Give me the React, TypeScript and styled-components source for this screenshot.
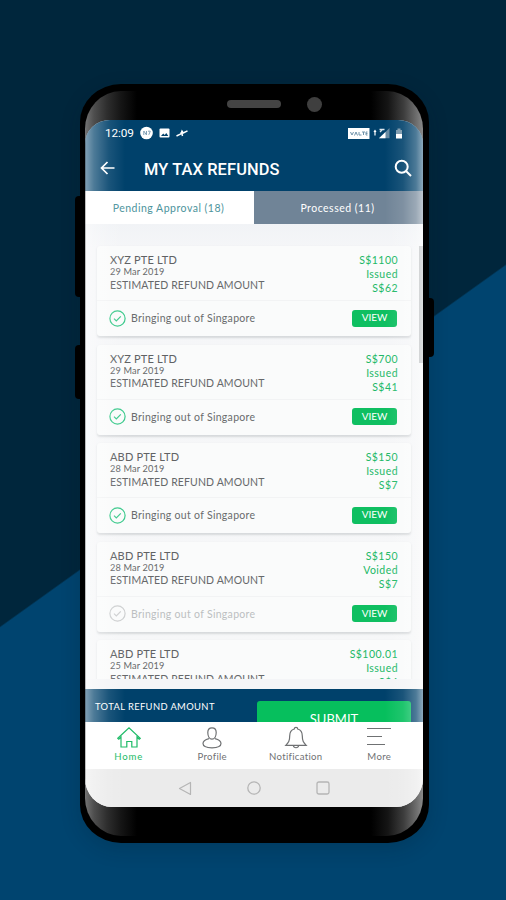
import React from "react";
import styled, { createGlobalStyle, css } from "styled-components";

const Global = createGlobalStyle`
  *, *::before, *::after { box-sizing: border-box; }
  html, body { margin: 0; padding: 0; background: #00446f; }
  body { font-family: Lato, "Open Sans", sans-serif; overflow: hidden; }
  svg { display: block; flex: none; }
`;

const Stage = styled.main`
  width: 506px;
  height: 900px;
  padding: 84px 77px 57px 80px;
  background: linear-gradient(144.4deg, #00263c 0, #00263c 49.6%, #00446f 49.75%, #00446f 100%);
`;

const Phone = styled.div`
  position: relative;
  width: 349px;
  height: 759px;
  padding: 7px 6px 7px 5px;
  border-radius: 41px / 38px;
  background: #000;
  box-shadow: 0 6px 20px rgba(0, 24, 40, 0.2);
`;

const SideButton = styled.i<{ $side: "left" | "right"; $top: number; $height: number }>`
  position: absolute;
  ${(p) => p.$side}: -5px;
  top: ${(p) => p.$top}px;
  width: 7px;
  height: ${(p) => p.$height}px;
  background: #000;
  border-radius: ${(p) => (p.$side === "left" ? "4px 0 0 4px" : "0 4px 4px 0")};
`;

const Body = styled.div`
  height: 100%;
  display: flex;
  flex-direction: column;
  overflow: hidden;
  border-radius: 36px / 38px;
  background: linear-gradient(90deg, #747474 0, #4e4e4e 9px, #2e2e2e 22px, #151515 36px, #000 52px, #000 286px, #151515 303px, #3e3e3e 319px, #707070 332px, #8a8a8a 100%);
`;

const Speaker = styled.div`
  height: 29px;
  flex: none;
  display: flex;
  align-items: center;
  gap: 26px;
  padding: 0 0 3px 142px;
`;

const Slot = styled.i`
  width: 54px;
  height: 8px;
  border-radius: 4px;
  background: #444;
`;

const Camera = styled.i`
  width: 15px;
  height: 15px;
  border-radius: 50%;
  background: #3f3f3f;
`;

const Screen = styled.div`
  position: relative;
  height: 687px;
  flex: none;
  display: flex;
  flex-direction: column;
  overflow: hidden;
  border-radius: 25px 25px 27px 27px / 24px 24px 29px 29px;
  background: #f5f6f8;
`;

const Sheen = styled.div`
  position: absolute;
  inset: 0;
  pointer-events: none;
  background: linear-gradient(90deg, rgba(120, 120, 120, 0.7) 0, rgba(255, 255, 255, 0.48) 1.5px, rgba(255, 255, 255, 0.3) 9px, rgba(255, 255, 255, 0.1) 24px, transparent 40px, transparent 300px, rgba(255, 255, 255, 0.1) 318px, rgba(255, 255, 255, 0.3) 331px, rgba(255, 255, 255, 0.55) 100%);
`;

const StatusBar = styled.div`
  height: 28px;
  flex: none;
  display: flex;
  align-items: center;
  padding: 0 19px 2px 20px;
  background: #00416b;
  color: #fff;
  font: 400 11.8px Roboto, sans-serif;
`;

const Clock = styled.span`
  width: 35px;
  letter-spacing: -0.1px;
`;

const Spacer = styled.span`
  flex: 1;
`;

const AppBar = styled.header`
  height: 43px;
  flex: none;
  display: flex;
  align-items: center;
  padding: 0 11px 3px 15px;
  background: #00416b;
`;

const Title = styled.h1`
  flex: 1;
  margin: 0 0 0 29px;
  padding-top: 2px;
  color: #fff;
  font: 500 16.4px Roboto, sans-serif;
  letter-spacing: 0.12px;
  white-space: nowrap;
`;

const Tabs = styled.div`
  height: 33px;
  flex: none;
  display: grid;
  grid-template-columns: 169px 1fr;
`;

const Tab = styled.div<{ $active?: boolean }>`
  display: flex;
  align-items: center;
  justify-content: center;
  padding: 0 2px 0 0;
  font-size: 10.5px;
  letter-spacing: 0.5px;
  background: ${(p) => (p.$active ? "#fff" : "#708497")};
  color: ${(p) => (p.$active ? "#4c939c" : "#fff")};
`;

const List = styled.div`
  position: relative;
  height: 455px;
  flex: none;
  overflow: hidden;
  padding: 22px 12px 0;
  display: flex;
  flex-direction: column;
  gap: 8.5px;
  background: linear-gradient(#f1f3f6, #f5f6f8 24px, #f6f7f8);
`;

const ScrollThumb = styled.i`
  position: absolute;
  top: 22px;
  right: 0;
  width: 4px;
  height: 117px;
  background: #b4b7ba;
`;

const Card = styled.article`
  height: 90px;
  flex: none;
  display: flex;
  flex-direction: column;
  border-radius: 3px;
  background: #fafbfb;
  box-shadow: 0 1.5px 2px rgba(60, 70, 80, 0.17);
`;

const CardTop = styled.div`
  height: 55px;
  display: flex;
  justify-content: space-between;
  padding: 7px 13px 0 13px;
  border-bottom: 1px solid #f2f3f4;
`;

const Column = styled.div<{ $right?: boolean }>`
  display: flex;
  flex-direction: column;
  white-space: nowrap;
  ${(p) =>
    p.$right &&
    css`
      align-items: flex-end;
      color: #21b866;
      font-size: 10.5px;
      line-height: 14.2px;
      letter-spacing: 0.45px;
    `}
`;

const Company = styled.div`
  font-size: 11px;
  line-height: 13px;
  letter-spacing: 0.16px;
  color: #606264;
`;

const DateLine = styled.div`
  font-size: 9.2px;
  line-height: 12.5px;
  letter-spacing: 0.15px;
  color: #66686a;
`;

const Estimate = styled.div`
  font-size: 10.5px;
  line-height: 13px;
  letter-spacing: 0.12px;
  color: #66686a;
`;

const CardFoot = styled.div<{ $muted?: boolean }>`
  flex: 1;
  display: flex;
  align-items: center;
  gap: 5px;
  padding: 0 14px 1px 12px;
  font-size: 10.5px;
  letter-spacing: 0.3px;
  white-space: nowrap;
  color: ${(p) => (p.$muted ? "#bcbfc1" : "#696b6d")};
`;

const ViewButton = styled.button`
  width: 45px;
  height: 17px;
  margin-left: auto;
  padding: 0 0 2px;
  border: 0;
  border-radius: 3px;
  background: #0fbf61;
  color: #fff;
  font: 400 10px Lato, sans-serif;
  letter-spacing: 0;
`;

const Gap = styled.div`
  height: 10px;
  flex: none;
  background: #f4f5f7;
`;

const TotalBar = styled.div`
  height: 33px;
  flex: none;
  display: flex;
  justify-content: space-between;
  overflow: hidden;
  padding: 0 12px 0 10px;
  background: #00416b;
  color: #fff;
`;

const Total = styled.div`
  display: flex;
  flex-direction: column;
  padding-top: 12px;
  font-size: 9.4px;
  line-height: 12px;
  letter-spacing: 0.38px;
  white-space: nowrap;
`;

const TotalValue = styled.div`
  margin: 7px 0 0 2px;
  font-size: 15px;
  line-height: 18px;
`;

const Submit = styled.button`
  width: 154px;
  height: 36px;
  margin-top: 12px;
  padding: 0;
  flex: none;
  border: 0;
  border-radius: 3px;
  background: #06bf5d;
  color: #fff;
  font: 400 13px Lato, sans-serif;
  letter-spacing: 0;
`;

const NavBar = styled.nav`
  height: 47px;
  flex: none;
  display: grid;
  grid-template-columns: repeat(4, 83.5px);
  padding-left: 2px;
  background: #fff;
`;

const NavItem = styled.div<{ $active?: boolean }>`
  display: flex;
  flex-direction: column;
  align-items: center;
  padding-top: 4px;
  color: ${(p) => (p.$active ? "#1dbb67" : "#6f7173")};
  font-size: 9.6px;
  line-height: 12px;
  letter-spacing: ${(p) => (p.$active ? 0.9 : 0.3)}px;
  & > svg { margin-bottom: 1px; }
`;

const SystemNav = styled.div`
  flex: 1;
  display: flex;
  align-items: center;
  justify-content: center;
  gap: 55px;
  background: #ebebeb;
`;

const CheckIcon = ({ muted }: { muted?: boolean }) => (
  <svg width="17" height="17" viewBox="0 0 17 17" fill="none" stroke={muted ? "#cdcfd0" : "#3ac98b"} strokeWidth="1.2">
    <circle cx="8.5" cy="8.5" r="7.6" />
    <path d="M5 8.600l2.300 2.300 4.500-4.600" />
  </svg>
);

const nav = [
  {
    label: "Home",
    icon: (
      <path d="M0.800 12.300L12 1.800l11.200 10.500-1 .9-2.200-2V21h-5.200v-5.500h-5V21H4v-9.800l-2.200 2z" />
    ),
  },
  {
    label: "Profile",
    icon: (
      <>
        <path d="M12 1.800c-2.800 0-4.200 1.900-4.200 4.700 0 3.400 1.600 6.600 4.200 6.600s4.200-3.200 4.200-6.600c0-2.800-1.400-4.700-4.200-4.700z" />
        <path d="M9 12.600c-3.500.8-6 2.600-6 5 0 2.800 4 4.200 9 4.200s9-1.400 9-4.200c0-2.400-2.500-4.200-6-5" />
      </>
    ),
  },
  {
    label: "Notification",
    icon: (
      <>
        <path d="M10.300 3c0-2.300 3.400-2.300 3.400 0 3.500 1 4.600 3.600 4.600 7 0 5 1.200 6.500 3.900 9.300H1.800C4.500 16.500 5.700 15 5.700 10c0-3.400 1.100-6 4.600-7z" />
        <path d="M9.300 19.500c.5 3 4.900 3 5.400 0" />
      </>
    ),
  },
  { label: "More", icon: <path d="M0 2.500h24M0 10.500h15M0 18.500h18" /> },
];

const refunds = [
  { company: "XYZ PTE LTD", date: "29 Mar 2019", amount: "S$1100", status: "Issued", refund: "S$62" },
  { company: "XYZ PTE LTD", date: "29 Mar 2019", amount: "S$700", status: "Issued", refund: "S$41" },
  { company: "ABD PTE LTD", date: "28 Mar 2019", amount: "S$150", status: "Issued", refund: "S$7" },
  { company: "ABD PTE LTD", date: "28 Mar 2019", amount: "S$150", status: "Voided", refund: "S$7" },
  { company: "ABD PTE LTD", date: "25 Mar 2019", amount: "S$100.01", status: "Issued", refund: "S$4" },
];

const StatusLeft = () => (
  <svg width="50" height="14" viewBox="0 0 50 14">
    <circle cx="6.500" cy="7" r="6.300" fill="#fff" />
    <path d="M3.800 9V5l2.700 4V5M8 5.200h2.300L8.800 8.800" fill="none" stroke="#84a2b7" />
    <rect x="19.500" y="2.500" width="10" height="9" rx="1" fill="#fff" />
    <path d="M21 10l2.200-2.500 1.500 1.500 1.600-2 2 3z" fill="#00416b" />
    <path d="M36.500 10l4.500-2.200 1-2.600 1.200 1.800 4.300-2.200M40.500 6.500l1.500 1.300.5 2.200" fill="none" stroke="#fff" strokeWidth="1.500" />
  </svg>
);

const StatusRight = () => (
  <svg width="56" height="14" viewBox="0 0 56 14">
    <rect x="0" y="2" width="21.500" height="11" fill="#fff" />
    <path d="M2.500 6l1.500 3 1.500-3M6.500 9.500L8 6l1.500 3.500M11 6v3h2.500M14 6h3M15.500 6v3M19.500 6H18v3h1.500M18 7.500h1.500" fill="none" stroke="#7194ab" />
    <path d="M27 4.500v5M26 6l1-1.500L28 6" fill="none" stroke="#fff" strokeWidth="1.200" />
    <path d="M31 12.200L41.500 2v10.200z" fill="#6689a1" />
    <path d="M31 12.200l6.500-6.300v6.300z" fill="#fff" />
    <path d="M31.500 3.500h5M32 6l2-2" stroke="#dce6ed" strokeWidth="1.300" fill="none" />
    <path d="M48 4h1.500V2.500h3V4H54v4h-6z" fill="#7896aa" />
    <path d="M48 8h6v4.500h-6z" fill="#fff" />
  </svg>
);

export default function App() {
  return (
    <Stage>
      <Global />
      <Phone>
        <SideButton $side="left" $top={112} $height={101} />
        <SideButton $side="left" $top={261} $height={54} />
        <SideButton $side="right" $top={214} $height={59} />
        <Body>
          <Speaker>
            <Slot />
            <Camera />
          </Speaker>
          <Screen>
            <StatusBar>
              <Clock>12:09</Clock>
              <StatusLeft />
              <Spacer />
              <StatusRight />
            </StatusBar>
            <AppBar>
              <svg width="15" height="14" viewBox="0 0 15 14" fill="none" stroke="#fff" strokeWidth="1.700">
                <path d="M7.500 1L1.500 7l6 6M1.500 7H14.500" />
              </svg>
              <Title>MY TAX REFUNDS</Title>
              <svg width="18" height="18" viewBox="0 0 18 18" fill="none" stroke="#fff" strokeWidth="2">
                <circle cx="7.700" cy="7.700" r="6" />
                <path d="M12 12l5 5" />
              </svg>
            </AppBar>
            <Tabs>
              <Tab $active>Pending Approval (18)</Tab>
              <Tab>Processed (11)</Tab>
            </Tabs>
            <List>
              {refunds.map((r, i) => (
                <Card key={i}>
                  <CardTop>
                    <Column>
                      <Company>{r.company}</Company>
                      <DateLine>{r.date}</DateLine>
                      <Estimate>ESTIMATED REFUND AMOUNT</Estimate>
                    </Column>
                    <Column $right>
                      <span>{r.amount}</span>
                      <span>{r.status}</span>
                      <span>{r.refund}</span>
                    </Column>
                  </CardTop>
                  <CardFoot $muted={r.status === "Voided"}>
                    <CheckIcon muted={r.status === "Voided"} />
                    <span>Bringing out of Singapore</span>
                    <ViewButton>VIEW</ViewButton>
                  </CardFoot>
                </Card>
              ))}
              <ScrollThumb />
            </List>
            <Gap />
            <TotalBar>
              <Total>
                TOTAL REFUND AMOUNT
                <TotalValue>S$</TotalValue>
              </Total>
              <Submit>SUBMIT</Submit>
            </TotalBar>
            <NavBar>
              {nav.map((n) => (
                <NavItem key={n.label} $active={n.label === "Home"}>
                  <svg width="24" height="24" viewBox="0 0 24 24" fill="none" stroke="currentColor" strokeWidth="1.200">
                    {n.icon}
                  </svg>
                  {n.label}
                </NavItem>
              ))}
            </NavBar>
            <SystemNav>
              <svg width="14" height="15" viewBox="0 0 14 15" fill="none" stroke="#b5b5b5" strokeWidth="1.200">
                <path d="M12.500 1.500v12L1.500 7.500z" strokeLinejoin="round" />
              </svg>
              <svg width="14" height="14" viewBox="0 0 14 14" fill="none" stroke="#b5b5b5" strokeWidth="1.300">
                <circle cx="7" cy="7" r="6.200" />
              </svg>
              <svg width="14" height="14" viewBox="0 0 14 14" fill="none" stroke="#b5b5b5" strokeWidth="1.300">
                <rect x="1" y="1" width="12" height="12" rx="1.800" />
              </svg>
            </SystemNav>
            <Sheen />
          </Screen>
        </Body>
      </Phone>
    </Stage>
  );
}
